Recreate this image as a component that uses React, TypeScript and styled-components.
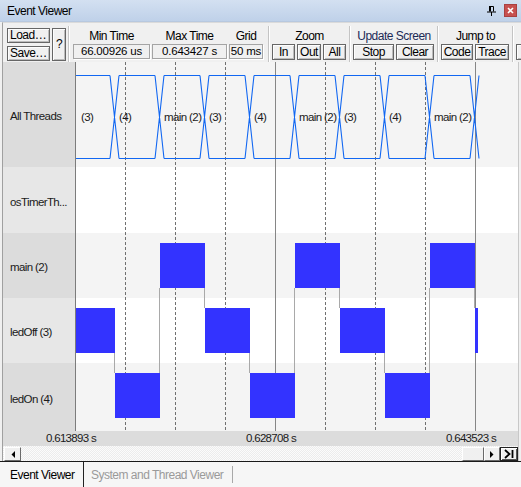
import React from 'react';
import styled, { createGlobalStyle } from 'styled-components';

const UI_FONT = `"Liberation Sans", Arial, sans-serif`;

const GlobalStyle = createGlobalStyle`
  html, body { margin: 0; padding: 0; background: #f0f0f0; }
  body { font-family: ${UI_FONT}; color: #000; }
  * { box-sizing: border-box; }
`;

// chart data
const rows = [
  { name: 'All Threads', h: 105, shade: true },
  { name: 'osTimerTh...', h: 66, shade: false },
  { name: 'main (2)', h: 65, shade: true },
  { name: 'ledOff (3)', h: 65, shade: false },
  { name: 'ledOn (4)', h: 68, shade: true },
];
const PLOT_X = 76;
const PLOT_Y = 62;
const PLOT_W = 442;
const PLOT_H = 369;
const rowTops = rows.reduce<number[]>((acc, r, i) => {
  acc.push(i === 0 ? PLOT_Y : acc[i - 1] + rows[i - 1].h);
  return acc;
}, []);

type Thread = 'ledOff' | 'ledOn' | 'main';
const seq: Thread[] = ['ledOff', 'ledOn', 'main'];
const threadRow: Record<Thread, number> = { main: 2, ledOff: 3, ledOn: 4 };
const threadTag: Record<Thread, string> = { ledOff: '(3)', ledOn: '(4)', main: 'main (2)' };
const T = (k: number) => 115 + 45 * k;

const segments = Array.from({ length: 10 }, (_, i) => ({
  thread: seq[i % 3],
  x0: i === 0 ? PLOT_X : T(i - 1),
  x1: i === 9 ? T(8) + 3 : T(i),
}));

const ticks = ['0.613893 s', '0.628708 s', '0.643523 s'];

const Window = styled.div`
  width: 521px;
  height: 487px;
  display: flex;
  flex-direction: column;
  overflow: hidden;
  background: #f0f0f0;
`;

const TitleBar = styled.div`
  flex: 0 0 22px;
  display: flex;
  align-items: center;
  padding: 0 4px 0 7px;
  background: linear-gradient(#d3e0f1, #bfd1e9);
  border-bottom: 1px solid #b7c8df;
  font-size: 12px;
  letter-spacing: -0.5px;
`;

const Title = styled.span`
  flex: 1;
`;

const PinIcon = styled.svg`
  margin-right: 8px;
`;

const CloseButton = styled.svg`
  display: block;
`;

const Toolbar = styled.div`
  flex: 0 0 40px;
  display: flex;
  margin-left: 2px;
  border-left: 1px solid #a0a0a0;
  border-top: 1px solid #dadada;
  padding: 5px 0 1px 4px;
  overflow: hidden;
  font-size: 12px;
  letter-spacing: -0.5px;
`;

const FileGroup = styled.div`
  display: flex;
  gap: 2px;
  width: 59px;
`;

const FileButtons = styled.div`
  display: flex;
  flex-direction: column;
  gap: 3px;
  width: 43px;
`;

const ToolButton = styled.button<{ $w: number; $h?: number; $left?: boolean }>`
  width: ${(p) => p.$w}px;
  height: ${(p) => p.$h ?? 16}px;
  flex: 0 0 auto;
  margin: 0;
  padding: ${(p) => (p.$left ? '0 0 0 2px' : '0')};
  text-align: ${(p) => (p.$left ? 'left' : 'center')};
  font-family: ${UI_FONT};
  font-size: 12px;
  letter-spacing: -0.5px;
  line-height: 13px;
  color: #000;
  background: #f0f0f0;
  border: 1px solid #666;
  box-shadow: inset 1px 1px 0 #fdfdfd, inset -1px -1px 0 #bcbcbc;
  white-space: nowrap;
  overflow: hidden;
`;

const Separator = styled.div`
  width: 2px;
  flex: 0 0 2px;
  margin: -2px 2px -1px;
  border-left: 1px solid #c4c4c4;
  border-right: 1px solid #fff;
`;

const Group = styled.div<{ $w: number }>`
  width: ${(p) => p.$w}px;
  flex: 0 0 auto;
  display: flex;
  flex-direction: column;
`;

const FieldGroup = styled.div`
  width: 194px;
  flex: 0 0 auto;
  display: flex;
  gap: 2px;
  padding-left: 1px;
`;

const Field = styled.div<{ $w: number }>`
  width: ${(p) => p.$w}px;
  display: flex;
  flex-direction: column;
`;

const GroupLabel = styled.div<{ $color?: string }>`
  height: 16px;
  line-height: 16px;
  text-align: center;
  white-space: nowrap;
  color: ${(p) => p.$color ?? '#000'};
`;

const ButtonRow = styled.div<{ $gap: number }>`
  display: flex;
  gap: ${(p) => p.$gap}px;
`;

const ValueBox = styled.div`
  height: 15px;
  line-height: 13px;
  text-align: center;
  white-space: nowrap;
  overflow: hidden;
  font-size: 11.5px;
  letter-spacing: -0.2px;
  background: #f0f0f0;
  border: 1px solid #a4a4a4;
  box-shadow: 1px 1px 0 #fff;
`;

const Chart = styled.div`
  flex: 0 0 ${PLOT_H}px;
  width: 517px;
  margin-left: 2px;
  display: flex;
  border-left: 1px solid #a0a0a0;
  border-right: 1px solid #c8c8c8;
  font-size: 11.5px;
  letter-spacing: -0.6px;
  color: #1a1a1a;
`;

const LabelColumn = styled.div`
  width: 73px;
  display: flex;
  flex-direction: column;
  border-right: 1px solid #7c7c7c;
`;

const LabelCell = styled.div<{ $h: number; $shade: boolean }>`
  height: ${(p) => p.$h}px;
  display: flex;
  align-items: center;
  padding: 3px 0 0 7px;
  white-space: nowrap;
  background: ${(p) => (p.$shade ? '#dcdcdc' : '#e7e7e7')};
`;

const Plot = styled.div`
  position: relative;
  width: ${PLOT_W}px;
  display: flex;
  flex-direction: column;
`;

const PlotRow = styled.div<{ $h: number; $shade: boolean }>`
  height: ${(p) => p.$h}px;
  background: ${(p) => (p.$shade ? '#f4f4f4' : '#ffffff')};
`;

const PlotOverlay = styled.svg`
  position: absolute;
  left: 0;
  top: 0;
`;

const AxisRow = styled.div`
  flex: 0 0 15px;
  width: 517px;
  margin-left: 2px;
  position: relative;
  border-left: 1px solid #a0a0a0;
  border-right: 1px solid #c8c8c8;
  background: #dcdcdc;
  font-size: 11.5px;
  letter-spacing: -0.7px;
  color: #1a1a1a;
`;

const Tick = styled.span`
  position: absolute;
  top: 0;
  line-height: 15px;
  white-space: nowrap;
  transform: translateX(-50%);
`;

const ScrollRow = styled.div`
  flex: 0 0 15px;
  width: 517px;
  margin-left: 2px;
  display: flex;
  align-items: flex-start;
  padding: 1px 0 0 1px;
  border-left: 1px solid #a0a0a0;
  border-right: 1px solid #c8c8c8;
  background: repeating-conic-gradient(#fbfbfb 0% 25%, #ececec 0% 50%) 0 0 / 2px 2px;
`;

const ScrollButton = styled.div<{ $w: number; $strong?: boolean }>`
  width: ${(p) => p.$w}px;
  height: 14px;
  flex: 0 0 auto;
  display: flex;
  align-items: center;
  justify-content: center;
  background: #f0f0f0;
  border: 1px solid;
  border-color: ${(p) => (p.$strong ? '#222' : '#fff #6a6a6a #6a6a6a #fff')};
  box-shadow: ${(p) => (p.$strong ? 'inset 1px 1px 0 #fff, inset -1px -1px 0 #555' : 'none')};
`;

const ScrollTrack = styled.div`
  flex: 1;
`;

const TabStrip = styled.div`
  flex: 0 0 26px;
  display: flex;
  border-top: 1px solid #1a1a1a;
  background: #f6f6f6;
  font-size: 12px;
  letter-spacing: -0.5px;
`;

const Tab = styled.div<{ $active?: boolean }>`
  display: flex;
  align-items: center;
  padding: ${(p) => (p.$active ? '0 0 0 10px' : '0 9px 0 7px')};
  width: ${(p) => (p.$active ? '84px' : 'auto')};
  color: ${(p) => (p.$active ? '#000' : '#9a9a9a')};
  border-right: ${(p) => (p.$active ? '1px solid #222' : 'none')};
  white-space: nowrap;
`;

const TabDivider = styled.div`
  width: 1px;
  margin: 4px 0 4px;
  background: #a8a8a8;
`;

function Waveform() {
  const top = 75.5;
  const bot = 158.5;
  let d = '';
  segments.slice(0, 9).forEach((s, i) => {
    const a = i === 0 ? PLOT_X : s.x0 - 0.5 + 4.5;
    const b = s.x1 - 0.5 - 4.5;
    d += `M${a} ${top}H${b}M${a} ${bot}H${b}`;
    const c = s.x1 - 0.5;
    d += `M${c - 4.5} ${top}L${c + 4.5} ${bot}M${c - 4.5} ${bot}L${c + 4.5} ${top}`;
  });
  return (
    <>
      <path d={d} fill="none" stroke="#1167f2" strokeWidth={1.1} />
      {segments.slice(0, 9).map((s, i) => (
        <text
          key={i}
          x={i === 0 ? 81 : s.x0 + 4}
          y={121}
          fontFamily={UI_FONT}
          fontSize={11.5}
          letterSpacing={-0.6}
          fill="#1a1a1a"
        >
          {threadTag[s.thread]}
        </text>
      ))}
    </>
  );
}

function Timeline() {
  const grid = Array.from({ length: 8 }, (_, g) => 75 + 50 * (g + 1));
  const connectors = Array.from({ length: 9 }, (_, k) => {
    const ra = threadRow[seq[k % 3]];
    const rb = threadRow[seq[(k + 1) % 3]];
    const upper = Math.min(ra, rb);
    const lower = Math.max(ra, rb);
    return { x: T(k) - 0.5, y1: rowTops[upper] + 55, y2: rowTops[lower] + 10 };
  });
  return (
    <PlotOverlay
      width={PLOT_W}
      height={PLOT_H}
      viewBox={`${PLOT_X} ${PLOT_Y} ${PLOT_W} ${PLOT_H}`}
    >
      {grid.map((x) =>
        (x - 75) % 200 === 0 ? (
          <line key={x} x1={x + 0.5} x2={x + 0.5} y1={PLOT_Y} y2={PLOT_Y + PLOT_H} stroke="#868686" />
        ) : (
          <line
            key={x}
            x1={x + 0.5}
            x2={x + 0.5}
            y1={PLOT_Y}
            y2={PLOT_Y + PLOT_H}
            stroke="#707070"
            strokeDasharray="3 2"
          />
        )
      )}
      {connectors.map((c, k) => (
        <line key={k} x1={c.x} x2={c.x} y1={c.y1} y2={c.y2} stroke="#a9a9a9" />
      ))}
      {segments.map((s, i) => (
        <rect
          key={i}
          x={s.x0}
          y={rowTops[threadRow[s.thread]] + 10}
          width={s.x1 - s.x0}
          height={45}
          fill="#3333ff"
          shapeRendering="crispEdges"
        />
      ))}
      <Waveform />
    </PlotOverlay>
  );
}

export default function App() {
  return (
    <>
      <GlobalStyle />
      <Window>
        <TitleBar>
          <Title>Event Viewer</Title>
          <PinIcon width="9" height="10" viewBox="0 0 9 10">
            <path d="M2 0.5H6.5V5.5M2.5 0V5.5M3.5 0V5.5" fill="none" stroke="#000" />
            <path d="M0 6H9M4.5 6V10" fill="none" stroke="#000" />
          </PinIcon>
          <CloseButton width="13" height="13" viewBox="0 0 13 13">
            <rect x="0.5" y="0.5" width="12" height="12" fill="#c75050" stroke="#a94040" />
            <path d="M4 4L9 9M9 4L4 9" stroke="#fff" strokeWidth="1.6" />
          </CloseButton>
        </TitleBar>

        <Toolbar>
          <FileGroup>
            <FileButtons>
              <ToolButton $w={43} $h={15} $left>Load…</ToolButton>
              <ToolButton $w={43} $h={15} $left>Save…</ToolButton>
            </FileButtons>
            <ToolButton $w={14} $h={33}>?</ToolButton>
          </FileGroup>
          <Separator />
          <FieldGroup>
            <Field $w={77}>
              <GroupLabel>Min Time</GroupLabel>
              <ValueBox>66.00926 us</ValueBox>
            </Field>
            <Field $w={75}>
              <GroupLabel>Max Time</GroupLabel>
              <ValueBox>0.643427 s</ValueBox>
            </Field>
            <Field $w={34}>
              <GroupLabel>Grid</GroupLabel>
              <ValueBox>50 ms</ValueBox>
            </Field>
          </FieldGroup>
          <Separator />
          <Group $w={75}>
            <GroupLabel>Zoom</GroupLabel>
            <ButtonRow $gap={2}>
              <ToolButton $w={23}>In</ToolButton>
              <ToolButton $w={24}>Out</ToolButton>
              <ToolButton $w={23}>All</ToolButton>
            </ButtonRow>
          </Group>
          <Separator />
          <Group $w={82}>
            <GroupLabel $color="#1c2a56">Update Screen</GroupLabel>
            <ButtonRow $gap={2}>
              <ToolButton $w={41}>Stop</ToolButton>
              <ToolButton $w={38}>Clear</ToolButton>
            </ButtonRow>
          </Group>
          <Separator />
          <Group $w={69}>
            <GroupLabel>Jump to</GroupLabel>
            <ButtonRow $gap={2}>
              <ToolButton $w={32}>Code</ToolButton>
              <ToolButton $w={34}>Trace</ToolButton>
            </ButtonRow>
          </Group>
          <Separator />
          <Group $w={30}>
            <GroupLabel>&nbsp;</GroupLabel>
            <ToolButton $w={30}>&nbsp;</ToolButton>
          </Group>
        </Toolbar>

        <Chart>
          <LabelColumn>
            {rows.map((r) => (
              <LabelCell key={r.name} $h={r.h} $shade={r.shade}>
                {r.name}
              </LabelCell>
            ))}
          </LabelColumn>
          <Plot>
            {rows.map((r) => (
              <PlotRow key={r.name} $h={r.h} $shade={r.shade} />
            ))}
            <Timeline />
          </Plot>
        </Chart>

        <AxisRow>
          {ticks.map((t, i) => (
            <Tick key={t} style={{ left: 75 + 200 * i - 4 - 3 }}>
              {t}
            </Tick>
          ))}
        </AxisRow>

        <ScrollRow>
          <ScrollButton $w={17}>
            <svg width="4" height="7" viewBox="0 0 4 7">
              <path d="M4 0V7L0.5 3.5Z" fill="#000" />
            </svg>
          </ScrollButton>
          <ScrollTrack />
          <ScrollButton $w={22} />
          <ScrollButton $w={16}>
            <svg width="4" height="7" viewBox="0 0 4 7">
              <path d="M0 0V7L3.5 3.5Z" fill="#000" />
            </svg>
          </ScrollButton>
          <ScrollButton $w={18} $strong>
            <svg width="12" height="10" viewBox="0 0 12 10">
              <path d="M2 1L6.5 5L2 9" fill="none" stroke="#000" strokeWidth="1.8" />
              <path d="M9.5 1V9" stroke="#000" strokeWidth="1.8" />
            </svg>
          </ScrollButton>
        </ScrollRow>

        <TabStrip>
          <Tab $active>Event Viewer</Tab>
          <Tab>System and Thread Viewer</Tab>
          <TabDivider />
        </TabStrip>
      </Window>
    </>
  );
}
